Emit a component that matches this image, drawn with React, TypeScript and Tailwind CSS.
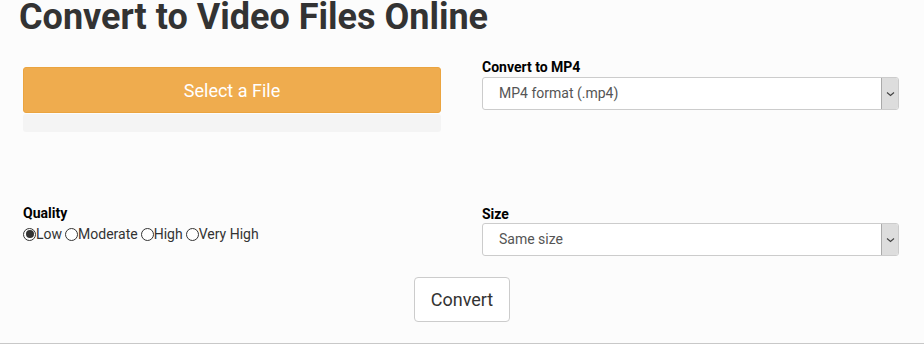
import React from "react";

function Chevron() {
  return (
    <svg width="9" height="6" viewBox="0 0 9 6" fill="none">
      <path d="M1 1.5 L4.5 4.5 L8 1.5" stroke="#444" strokeWidth="1.2" />
    </svg>
  );
}

function FakeSelect({ value }: { value: string }) {
  return (
    <div className="flex h-[33px] w-[417px] rounded-[3px] border border-[#ccc] bg-white overflow-hidden">
      <div className="flex-1 flex items-center pl-[16px] text-[14px] text-[#555]">{value}</div>
      <div className="w-[17px] flex items-center justify-center bg-[#ddd] border-l border-[#aaa]">
        <Chevron />
      </div>
    </div>
  );
}

function Radio({ checked, label }: { checked?: boolean; label: string }) {
  return (
    <span className="inline-flex items-center">
      <span className="w-[13px] h-[13px] rounded-full border border-[#333] flex items-center justify-center bg-white">
        {checked && <span className="w-[8px] h-[8px] rounded-full bg-[#333]" />}
      </span>
      <span>{label}</span>
    </span>
  );
}

export default function App() {
  return (
    <div
      className="w-[924px] h-[344px] bg-[#fcfcfc] border-b border-[#c8c8c8] overflow-hidden text-[#222]"
      style={{ fontFamily: "Roboto, 'Liberation Sans', sans-serif" }}
    >
      <h1 className="text-[36px] leading-[34px] font-bold text-[#333] pl-[19px]">
        Convert to Video Files Online
      </h1>
      <div className="flex pl-[23px] gap-[41px] mt-[26px]">
        <div className="w-[418px] pt-[7px]">
          <div className="h-[46px] rounded-[3px] bg-[#efac4e] border border-[#eba43f] flex items-center justify-center text-white text-[18px]">
            Select a File
          </div>
          <div className="h-[18px] mt-[1px] rounded-[3px] bg-[#f4f4f4]" />
        </div>
        <div className="w-[417px] mt-[-1px]">
          <div className="text-[14px] font-bold text-black leading-[16px] mb-[2px]">Convert to MP4</div>
          <FakeSelect value="MP4 format (.mp4)" />
        </div>
      </div>
      <div className="flex pl-[23px] gap-[41px] mt-[73px]">
        <div className="w-[418px]">
          <div className="text-[14px] font-bold text-black leading-[16px]">Quality</div>
          <div className="flex items-center gap-[3px] text-[14px] text-[#333] leading-[20px] mt-[3px]">
            <Radio checked label="Low" />
            <Radio label="Moderate" />
            <Radio label="High" />
            <Radio label="Very High" />
          </div>
        </div>
        <div className="w-[417px] pt-[1px]">
          <div className="text-[14px] font-bold text-black leading-[16px] mb-[1px]">Size</div>
          <FakeSelect value="Same size" />
        </div>
      </div>
      <div className="flex justify-center mt-[21px]">
        <div className="w-[96px] h-[45px] rounded-[4px] border border-[#ccc] bg-white flex items-center justify-center text-[18px] text-[#333]">
          Convert
        </div>
      </div>
    </div>
  );
}
